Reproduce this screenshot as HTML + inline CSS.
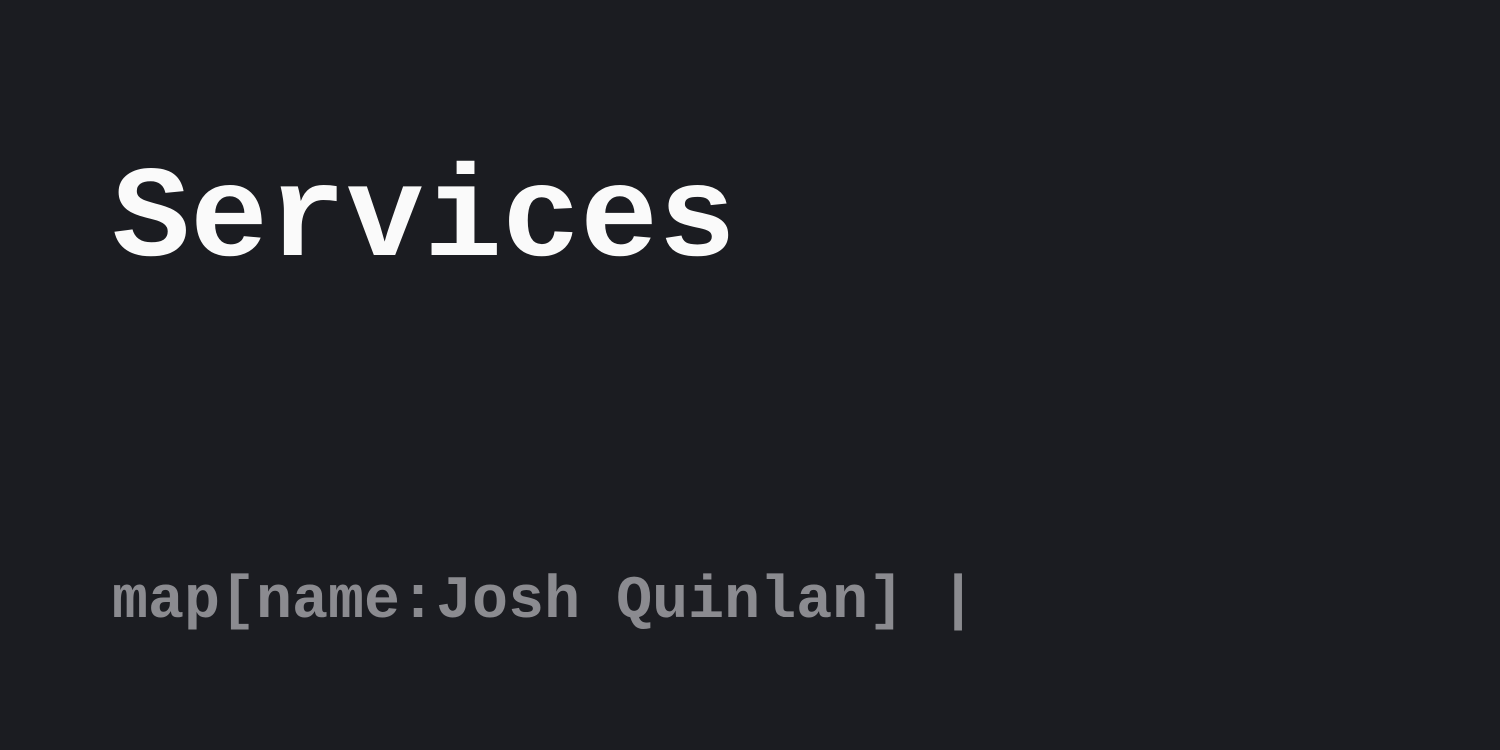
<!DOCTYPE html>
<html><head><meta charset="utf-8"><style>
html,body{margin:0;padding:0;width:1500px;height:750px;background:#1b1c21;overflow:hidden}
div{position:absolute;left:112px;font-family:"Liberation Mono",monospace;font-weight:bold;line-height:1;white-space:pre}
#t{top:157px;font-size:130px;color:#fafafa}
#s{top:572px;font-size:60px;color:#8b8b90}
</style></head><body>
<div id="t">Services</div>
<div id="s">map[name:Josh Quinlan] |</div>
</body></html>
